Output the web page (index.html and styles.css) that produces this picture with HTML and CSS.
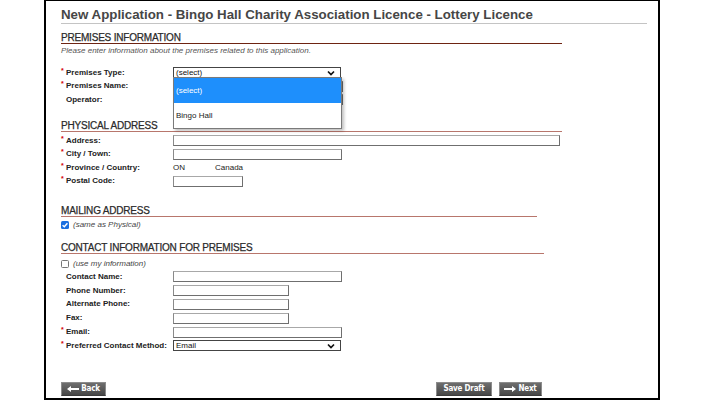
FILE: index.html
```html
<!DOCTYPE html>
<html lang="en">

<head>
    <meta charset="UTF-8">
    <meta name="viewport" content="width=device-width, initial-scale=1.0">
    <title>New Application - Bingo Hall Charity Association Licence</title>
    <link rel="stylesheet" href="styles.css">
</head>

<body>
    <div class="page">
        <h1 class="page-title">New Application - Bingo Hall Charity Association Licence - Lottery Licence</h1>

        <!-- Premises -->
        <h2 class="sec-head sec-head-first">PREMISES INFORMATION</h2>
        <p class="note">Please enter information about the premises related to this application.</p>
        <div class="rows rows-premises">
            <label class="lbl req">Premises Type:</label>
            <div class="field">
                <div class="select">
                    <span>(select)</span>
                    <svg class="chev" width="8" height="6" viewBox="0 0 8 6"><polyline points="1,1.5 4,4.5 7,1.5" fill="none" stroke="#111" stroke-width="1.7"/></svg>
                </div>
                <ul class="dropdown">
                    <li class="active">(select)</li>
                    <li>Bingo Hall</li>
                </ul>
            </div>
            <label class="lbl req">Premises Name:</label>
            <div class="field"><input class="inp inp-mid2" type="text"></div>
            <label class="lbl">Operator:</label>
            <div class="field"><input class="inp inp-mid2" type="text"></div>
        </div>

        <!-- Physical -->
        <h2 class="sec-head sec-head-phys">PHYSICAL ADDRESS</h2>
        <div class="rows rows-phys">
            <label class="lbl req">Address:</label>
            <div class="field"><input class="inp inp-long" type="text"></div>
            <label class="lbl req">City / Town:</label>
            <div class="field"><input class="inp inp-mid" type="text"></div>
            <label class="lbl req">Province / Country:</label>
            <div class="field plain"><span class="prov">ON</span><span>Canada</span></div>
            <label class="lbl req">Postal Code:</label>
            <div class="field"><input class="inp inp-postal" type="text"></div>
        </div>

        <!-- Mailing -->
        <h2 class="sec-head sec-head-mail">MAILING ADDRESS</h2>
        <div class="check-row check-mail">
            <span class="box checked"><svg width="8" height="8" viewBox="0 0 8 8"><polyline points="1.6,4.2 3.3,5.8 6.4,2.2" fill="none" stroke="#fff" stroke-width="1.4"/></svg></span>
            <span class="check-text">(same as Physical)</span>
        </div>

        <!-- Contact -->
        <h2 class="sec-head sec-head-contact">CONTACT INFORMATION FOR PREMISES</h2>
        <div class="check-row check-contact">
            <span class="box"></span>
            <span class="check-text">(use my information)</span>
        </div>
        <div class="rows rows-contact">
            <label class="lbl">Contact Name:</label>
            <div class="field"><input class="inp inp-mid" type="text"></div>
            <label class="lbl">Phone Number:</label>
            <div class="field"><input class="inp inp-short" type="text"></div>
            <label class="lbl">Alternate Phone:</label>
            <div class="field"><input class="inp inp-short" type="text"></div>
            <label class="lbl">Fax:</label>
            <div class="field"><input class="inp inp-short" type="text"></div>
            <label class="lbl req">Email:</label>
            <div class="field"><input class="inp inp-mid" type="text"></div>
            <label class="lbl req">Preferred Contact Method:</label>
            <div class="field">
                <div class="select">
                    <span>Email</span>
                    <svg class="chev" width="8" height="6" viewBox="0 0 8 6"><polyline points="1,1.5 4,4.5 7,1.5" fill="none" stroke="#111" stroke-width="1.7"/></svg>
                </div>
            </div>
        </div>

        <div class="actions">
            <button type="button" class="btn btn-back">
                <svg width="12" height="6" viewBox="0 0 12 6"><polygon points="0,3 4,0 4,2 12,2 12,4 4,4 4,6" fill="#fff"/></svg>
                Back
            </button>
            <div class="spacer"></div>
            <button type="button" class="btn btn-save">Save Draft</button>
            <button type="button" class="btn btn-next">
                <svg width="12" height="6" viewBox="0 0 12 6"><polygon points="12,3 8,0 8,2 0,2 0,4 8,4 8,6" fill="#fff"/></svg>
                Next
            </button>
        </div>
    </div>
</body>

</html>
```

FILE: styles.css
```css
html,
body {
    margin: 0;
    background: #fff;
}

body {
    font-family: "Liberation Sans", Arial, sans-serif;
    color: #222;
}

.page {
    box-sizing: border-box;
    width: 616px;
    height: 400px;
    margin-left: 44px;
    padding: 0 11px 0 15px;
    border: 2px solid #000;
    border-top-width: 1px;
}

.page-title {
    margin: 0;
    padding-top: 6px;
    font-size: 13.3px;
    line-height: 16px;
    font-weight: bold;
    color: #464646;
    border-bottom: 1px solid #c4c4c4;
}

.sec-head {
    width: 501px;
    margin: 0;
    font-size: 10px;
    line-height: 11px;
    font-weight: normal;
    letter-spacing: -0.2px;
    color: #2b2b2b;
    -webkit-text-stroke: 0.25px #2b2b2b;
    border-bottom: 1px solid #b8766c;
}

.sec-head-first {
    margin-top: 8px;
    border-bottom-color: #6e2412;
}

.sec-head-phys {
    margin-top: 13.5px;
}

.sec-head-mail {
    width: 476px;
    margin-top: 17px;
}

.sec-head-contact {
    width: 483px;
    margin-top: 11px;
}

.note {
    margin: 2px 0 0;
    font-size: 8px;
    line-height: 10px;
    font-style: italic;
    color: #555;
}

.rows {
    display: grid;
    grid-template-columns: 112px auto;
    grid-auto-rows: 13.5px;
    align-items: center;
}

.rows-premises {
    margin-top: 10px;
}

.rows-phys {
    margin-top: 2px;
}

.rows-contact {
    grid-auto-rows: 13.8px;
}

.lbl {
    position: relative;
    padding-left: 5px;
    font-size: 8px;
    line-height: 10px;
    font-weight: bold;
    color: #222;
    white-space: nowrap;
}

.req::before {
    content: "*";
    position: absolute;
    left: 0;
    top: -2px;
    font-size: 7px;
    color: #d40000;
}

.field {
    position: relative;
    display: flex;
    align-items: center;
    height: 11px;
}

.field.plain {
    font-size: 8px;
    color: #222;
}

.prov {
    width: 42px;
}

.inp {
    box-sizing: border-box;
    height: 11px;
    margin: 0;
    padding: 0;
    border: 1px solid #6f6f6f;
    border-top-color: #a8a8a8;
    border-left-color: #8a8a8a;
    background: #fff;
    outline: none;
}

.inp-long {
    width: 387px;
}

.inp-mid {
    width: 169px;
}

.inp-mid2 {
    width: 170px;
}

.inp-short {
    width: 116px;
}

.inp-postal {
    width: 70px;
}

.select {
    box-sizing: border-box;
    display: flex;
    align-items: center;
    justify-content: space-between;
    width: 168px;
    height: 11px;
    padding: 0 5px 0 2px;
    border: 1px solid #444;
    background: #fff;
    font-size: 8px;
    color: #111;
}

.chev {
    display: block;
}

.dropdown {
    position: absolute;
    left: 0;
    top: 10px;
    z-index: 5;
    box-sizing: border-box;
    width: 169px;
    height: 52px;
    margin: 0;
    padding: 0;
    list-style: none;
    background: #fff;
    border: 1px solid #7a7a7a;
    box-shadow: 2px 2px 3px rgba(0, 0, 0, .25);
    font-size: 8px;
}

.dropdown li {
    height: 25px;
    line-height: 25px;
    padding-left: 2px;
    color: #222;
}

.dropdown li.active {
    background: #1e8ffc;
    color: #fff;
}

.check-row {
    display: flex;
    align-items: center;
    gap: 4px;
    height: 13px;
}

.check-mail {
    margin-top: 1px;
}

.check-contact {
    margin-top: 3px;
}

.box {
    box-sizing: border-box;
    display: flex;
    width: 8px;
    height: 8px;
    border: 1px solid #767676;
    border-radius: 1.5px;
    background: #fff;
}

.box.checked {
    border: none;
    background: #1a6fe0;
}

.check-text {
    font-size: 8px;
    font-style: italic;
    color: #444;
}

.actions {
    display: flex;
    align-items: center;
    gap: 7px;
    width: 481px;
    margin-top: 29px;
}

.spacer {
    flex: 1;
}

.btn {
    box-sizing: border-box;
    display: flex;
    align-items: center;
    justify-content: center;
    gap: 2px;
    height: 14px;
    margin: 0;
    padding: 0;
    border: 1px solid #8c8c8c;
    border-bottom-color: #3c3c3c;
    background: linear-gradient(#6e6e6e, #474747);
    color: #fff;
    font-family: "DejaVu Sans Condensed", "DejaVu Sans", sans-serif;
    font-stretch: condensed;
    font-size: 8px;
    font-weight: bold;
    letter-spacing: -0.2px;
}

.btn-back {
    width: 45px;
}

.btn-save {
    width: 56px;
}

.btn-next {
    width: 43px;
}
```
